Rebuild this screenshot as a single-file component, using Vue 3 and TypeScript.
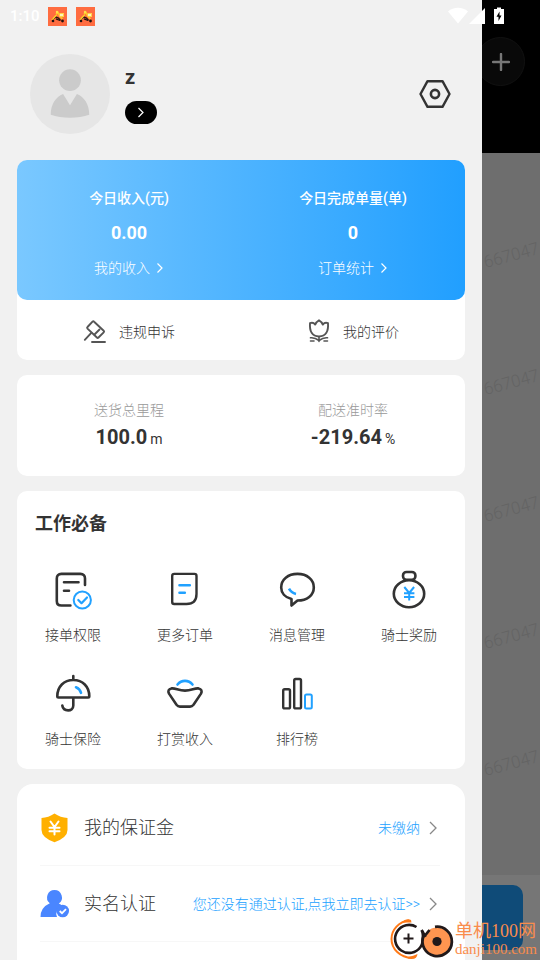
<script setup lang="ts">
interface Tool {
  id: string
  label: string
}

const tools: Tool[] = [
  { id: 'permission', label: '接单权限' },
  { id: 'orders', label: '更多订单' },
  { id: 'messages', label: '消息管理' },
  { id: 'rewards', label: '骑士奖励' },
  { id: 'insurance', label: '骑士保险' },
  { id: 'tips', label: '打赏收入' },
  { id: 'ranking', label: '排行榜' },
]

const earnings = [
  { title: '今日收入(元)', value: '0.00', link: '我的收入' },
  { title: '今日完成单量(单)', value: '0', link: '订单统计' },
]

const stats = [
  { label: '送货总里程', value: '100.0', unit: 'm' },
  { label: '配送准时率', value: '-219.64', unit: '%' },
]

const marks = ['667047', '667047', '667047', '667047', '667047']
</script>

<template>
  <div class="screen">
    <header class="status">
      <div class="status-left">
        <span class="clock">1:10</span>
        <svg v-for="n in 2" :key="n" class="app-badge" viewBox="0 0 19 19" aria-hidden="true">
          <rect width="19" height="19" fill="#ff6c40" />
          <path d="M4.500 12.500l3.500-2.500 2.500 1 2 2.500" stroke="#2b1a12" stroke-width="1.400" fill="none" />
          <path d="M8 7l2-1.500 1.500 3 3 3.500M4 13l3-3.500 2-2" stroke="#ffc928" stroke-width="1.600" fill="none" />
          <rect x="11.500" y="6" width="4.500" height="4" fill="#ffd34a" />
          <rect x="12" y="7" width="3" height="2" fill="#fff3c0" />
          <circle cx="9" cy="5" r="1.200" fill="#ffe04a" />
          <circle cx="5" cy="14" r="1.300" fill="#20130f" />
          <circle cx="14.500" cy="14" r="1.400" fill="#20130f" />
          <path d="M8 11.800l4 1.700" stroke="#20130f" stroke-width="1.300" />
        </svg>
      </div>
      <div class="status-right">
        <svg width="20" height="18" viewBox="0 0 20 18" aria-hidden="true"><path d="M0 4.500C5.500-.5 14.500-.5 20 4.500L10 16.500z" fill="#fff" /></svg>
        <svg class="signal" width="16" height="18" viewBox="0 0 16 18" aria-hidden="true"><path d="M0 17L16 1v16z" fill="#fff" /></svg>
        <svg width="10" height="18" viewBox="0 0 10 18" aria-hidden="true"><path d="M0 2h3V.500h4V2h3v15H0z" fill="#fff" /><path d="M5.500 4.500L2.500 9.800h2v4.200L7.500 8.500h-2z" fill="#000" /></svg>
      </div>
    </header>

    <main class="drawer">
      <section class="profile">
        <svg class="avatar" viewBox="0 0 81 81" role="img" aria-label="头像">
          <circle cx="40.500" cy="40.500" r="40.500" fill="#e6e6e6" />
          <circle cx="40.500" cy="26.500" r="11" fill="#cbcbcb" />
          <path d="M33.500 40.500L40.500 52l7-11.500C55 43.500 60 51 60 61.500c-11 4-28 4-39 0C21 51 26 43.500 33.500 40.500z" fill="#cbcbcb" />
        </svg>
        <div class="who">
          <h1 class="name">z</h1>
          <button class="level" aria-label="等级"><svg width="8" height="11" viewBox="0 0 8 11"><path d="M1.500 1L6 5.500 1.500 10" fill="none" stroke="#fff" stroke-width="1.200" /></svg></button>
        </div>
        <button class="settings" aria-label="设置">
          <svg width="32" height="30" viewBox="0 0 32 30" fill="none" stroke="#333" stroke-linejoin="round">
            <path d="M8.500 2.200h15L30.500 15l-7 12.800h-15L1.500 15z" stroke-width="2.400" />
            <circle cx="16" cy="15" r="4.100" stroke-width="2.600" />
          </svg>
        </button>
      </section>

      <section class="card income">
        <div class="income-top">
          <div v-for="e in earnings" :key="e.title" class="income-col">
            <h2>{{ e.title }}</h2>
            <strong>{{ e.value }}</strong>
            <a href="#">{{ e.link }}<svg width="8" height="12" viewBox="0 0 8 12"><path d="M1.500 1.500L6 6l-4.500 4.500" fill="none" stroke="currentColor" stroke-width="1.200" /></svg></a>
          </div>
        </div>
        <div class="income-links">
          <a href="#">
            <svg width="24" height="25" viewBox="0 0 24 25" fill="none" stroke="#555" stroke-width="1.900" stroke-linecap="round" stroke-linejoin="round">
              <path d="M4.500 8l5-5.300q.8-.8 1.600 0l9.600 9q.8.800 0 1.600l-5.200 5.200q-.8.800-1.600 0L4.500 9.600q-.8-.8 0-1.600z" />
              <path d="M8.300 13.800L1.800 20.800M11.500 15.500l5-5M9 23h13" />
            </svg>
            违规申诉
          </a>
          <a href="#">
            <svg width="24" height="25" viewBox="0 0 24 25" fill="none" stroke="#555" stroke-width="1.900" stroke-linecap="round" stroke-linejoin="round">
              <path d="M3 4.200c2-.8 4-.2 5.200 1.400.8-2 2-3.300 3.800-4.300 1.800 1 3 2.300 3.800 4.300 1.200-1.600 3.200-2.200 5.200-1.400.6 8-2 13.300-9 13.300S2.400 12.200 3 4.200z" />
              <path d="M12 18v4.500M3.500 18.800c3-.4 5.500.4 8.500 2.700 3-2.300 5.500-3.100 8.500-2.700M3.500 22h3.500M20.500 22H17" stroke-width="1.600" />
            </svg>
            我的评价
          </a>
        </div>
      </section>

      <section class="card stats">
        <div v-for="s in stats" :key="s.label" class="stat">
          <span>{{ s.label }}</span>
          <p><strong>{{ s.value }}</strong><small>{{ s.unit }}</small></p>
        </div>
      </section>

      <section class="card work">
        <h2>工作必备</h2>
        <nav class="tools">
          <a v-for="t in tools" :key="t.id" href="#">
            <svg width="40" height="40" viewBox="0 0 40 40" fill="none" stroke="#333" stroke-width="2.600" stroke-linecap="round" stroke-linejoin="round">
              <template v-if="t.id === 'permission'">
                <path d="M32 15V8.500q0-4.600-4.600-4.600H8.400Q3.800 3.900 3.800 8.500v22.400q0 4.600 4.600 4.600h9M11 12.300h14.500M11 20.800h5" />
                <circle cx="29.300" cy="30" r="8.600" stroke="#21a1ff" stroke-width="2" />
                <path d="M25.300 30l3.200 3.200 5.500-5.700" stroke="#21a1ff" stroke-width="2.200" />
              </template>
              <template v-else-if="t.id === 'orders'">
                <path d="M9 3.900h20.500q2 0 2 2V24q0 10-10 10H9.200q-2 0-2-2V5.900q0-2 2-2z" stroke-width="2.400" />
                <path d="M14.500 15.300h10.300M14.500 22.700h5.300" stroke="#21a1ff" />
              </template>
              <template v-else-if="t.id === 'messages'">
                <path d="M20.500 3.900C30 3.900 36.800 9.500 36.800 17.400S30 30.500 20.500 30.500L14.500 35.500V29C8 27.500 4.200 23 4.200 17.400 4.200 9.500 11 3.900 20.500 3.900z" />
                <path d="M12 18.700c1.500 2.800 4 4.600 7 5.300" stroke="#21a1ff" stroke-linecap="butt" />
              </template>
              <template v-else-if="t.id === 'rewards'">
                <ellipse cx="20" cy="23.700" rx="15.200" ry="13.500" />
                <rect x="14" y="2" width="12.400" height="7.800" rx="3.500" />
                <path d="M15.300 17l4.900 6 4.900-6M20.200 23v7.500M15 23.300h10.400M15 27h10.400" stroke="#21a1ff" stroke-width="2" stroke-linecap="butt" />
              </template>
              <template v-else-if="t.id === 'insurance'">
                <path d="M20.300 2v4M4.300 22.300C4.300 12.500 11 6 20.300 6s16 6.500 16 16.300q0 1.200-1.200 1.200H5.500q-1.200 0-1.200-1.200zM20.300 24v7.500c0 6.500-10 6.500-11 0" />
                <path d="M23 13.300q3.800 1.400 5 5.500" stroke="#21a1ff" />
              </template>
              <template v-else-if="t.id === 'tips'">
                <path d="M6.500 14.400c4-.5 7 2.200 13.500 2.200s9.500-2.700 13.500-2.200q4.500 1 2.500 5.200l-7.500 11.200q-1.400 1.800-3.500 1.800H15q-2.100 0-3.500-1.800L4 19.600q-2-4.200 2.500-5.200z" />
                <path d="M12.500 10.500c4-4.800 11-4.800 15 0" stroke="#21a1ff" />
              </template>
              <template v-else>
                <rect x="6.200" y="15.200" width="6.800" height="19.200" rx="1.500" stroke-width="2.400" />
                <rect x="17.200" y="5" width="6.800" height="29.400" rx="1.500" stroke-width="2.400" />
                <rect x="28" y="20.600" width="6.800" height="13.800" rx="1.500" stroke="#21a1ff" stroke-width="2" />
              </template>
            </svg>
            <span>{{ t.label }}</span>
          </a>
        </nav>
      </section>

      <section class="card account">
        <a href="#" class="row">
          <svg width="30" height="30" viewBox="0 0 30 30">
            <path d="M14.500.500Q20.500 4.500 27.500 5V17q0 7.500-13 12.300Q1.500 24.500 1.500 17V5Q8.500 4.500 14.500.500z" fill="#ffb000" />
            <path d="M10.500 8.500l4 5.500 4-5.500M14.500 14v7.500M9.500 14.800h10M9.500 18.300h10" fill="none" stroke="#fff" stroke-width="2" stroke-linecap="round" />
          </svg>
          <span class="row-label">我的保证金</span>
          <span class="row-note">未缴纳</span>
          <svg class="chevron" width="10" height="14" viewBox="0 0 10 14"><path d="M2 1l6 6-6 6" /></svg>
        </a>
        <a href="#" class="row">
          <svg width="30" height="30" viewBox="0 0 30 30">
            <path d="M14.500 1a7.500 7.500 0 0 1 4.300 13.600q2 .9 3.700 2.400A8 8 0 0 0 17 28H.5Q.5 18.500 9.800 14.300A7.500 7.500 0 0 1 14.500 1z" fill="#4a86ff" />
            <circle cx="22.700" cy="22" r="6.300" fill="#4a86ff" />
            <path d="M19.700 22l2.300 2.200 4-4" fill="none" stroke="#fff" stroke-width="1.800" />
          </svg>
          <span class="row-label">实名认证</span>
          <span class="row-note">您还没有通过认证,点我立即去认证&gt;&gt;</span>
          <svg class="chevron" width="10" height="14" viewBox="0 0 10 14"><path d="M2 1l6 6-6 6" /></svg>
        </a>
        <div class="row"></div>
      </section>
    </main>

    <aside class="peek">
      <div class="peek-head">
        <button aria-label="添加"><svg width="18" height="18" viewBox="0 0 18 18"><path d="M9 1v16M1 9h16" stroke="#777" stroke-width="2.400" stroke-linecap="round" /></svg></button>
      </div>
      <div class="peek-body">
        <span v-for="(m, i) in marks" :key="i">{{ m }}</span>
      </div>
      <div class="peek-foot"><div class="peek-action"></div></div>
    </aside>

    <div class="site">
      <svg width="64" height="42" viewBox="0 0 64 42" fill="none" aria-hidden="true">
        <path d="M19 2.500C9 3.500 1.500 11.500 1.500 21 1.500 31 10 39.500 22 40" stroke="#ff7a18" stroke-width="2" />
        <path d="M11 4.500q6-5 10-2.500l.5 2.500zM18 40.500q9 2 9.500-4.500-4 2-9.500 3z" fill="#ff7a18" />
        <circle cx="19" cy="20.500" r="15" fill="#fff" />
        <path d="M26.500 9A14 14 0 1 0 30.500 29Q34 24 32.500 13" stroke="#21191a" stroke-width="2.600" />
        <circle cx="47" cy="23.500" r="14" fill="#ff9550" />
        <path d="M45 8.900A14.700 14.700 0 1 1 33.500 18M31.500 12l4 7M39.500 12l-4 5" stroke="#21191a" stroke-width="2.800" />
        <circle cx="47" cy="23.500" r="4.600" fill="#21191a" />
        <path d="M18.500 15.500v10M13.500 20.500h10" stroke="#21191a" stroke-width="2" />
      </svg>
      <p><b>单机100网</b><span>danji100.com</span></p>
    </div>
  </div>
</template>

<style>
body {
  margin: 0;
}
</style>

<style scoped>
.screen {
  position: relative;
  display: flex;
  height: 100vh;
  overflow: hidden;
  background: #f1f1f1;
  color: #333;
  font: 300 14px/20px Roboto, "Noto Sans CJK SC", sans-serif;
}
h1, h2, p {
  margin: 0;
}
strong {
  font-weight: 700;
}
a {
  color: inherit;
  text-decoration: none;
}
button {
  display: flex;
  align-items: center;
  justify-content: center;
  padding: 0;
  border: 0;
  background: none;
}
svg {
  flex: none;
}
.status {
  position: absolute;
  z-index: 2;
  inset: 0 0 auto;
  display: flex;
  justify-content: space-between;
  padding: 6px 36px 0 10px;
}
.status-left, .status-right {
  display: flex;
  align-items: center;
}
.status-left {
  gap: 9px;
}
.clock {
  width: 29px;
  color: #fff;
  font-size: 15px;
  font-weight: 500;
}
.app-badge {
  width: 19px;
  height: 19px;
}
.signal {
  margin: 0 9px 0 1px;
}
.drawer {
  flex: 1;
  min-width: 0;
  overflow: hidden;
  padding: 0 17px;
  background: #f1f1f1;
}
.profile {
  display: flex;
  align-items: center;
  gap: 15px;
  padding: 54px 14px 26px 13px;
}
.avatar {
  width: 80px;
  height: 80px;
}
.who {
  flex: 1;
}
.name {
  margin-bottom: 12px;
  font-size: 20px;
  line-height: 24px;
}
.level {
  width: 32px;
  height: 23px;
  border-radius: 12px;
  background: #000;
}
.card {
  margin-bottom: 15px;
  border-radius: 10px;
  background: #fff;
}
.income-top {
  display: grid;
  grid-template-columns: 1fr 1fr;
  padding: 28px 0 22px;
  border-radius: 10px;
  background: linear-gradient(90deg, #7ac8ff, #219fff);
  color: #fff;
}
.income-col {
  display: flex;
  flex-direction: column;
  align-items: center;
  gap: 12px;
}
.income-col h2 {
  font-size: 14px;
  font-weight: 500;
}
.income-col strong {
  font-size: 18px;
  line-height: 26px;
}
.income-col a {
  display: flex;
  align-items: center;
  gap: 6px;
}
.income-links {
  display: grid;
  grid-template-columns: 1fr 1fr;
  height: 60px;
}
.income-links a {
  display: flex;
  align-items: center;
  justify-content: center;
  gap: 12px;
  padding-top: 3px;
}
.stats {
  display: grid;
  grid-template-columns: 1fr 1fr;
  padding: 25px 0;
}
.stat {
  display: flex;
  flex-direction: column;
  align-items: center;
  gap: 5px;
}
.stat span {
  color: #999;
}
.stat p {
  display: flex;
  align-items: baseline;
  gap: 3px;
  line-height: 24px;
}
.stat strong {
  font-size: 20px;
}
.stat small {
  font-size: 14px;
  font-weight: 400;
}
.work {
  padding: 21px 0 20px;
}
.work h2 {
  padding: 0 18px 34px;
  font-size: 18px;
  line-height: 24px;
}
.tools {
  display: grid;
  grid-template-columns: repeat(4, 1fr);
  row-gap: 29px;
}
.tools a {
  display: flex;
  flex-direction: column;
  align-items: center;
  gap: 15px;
}
.account {
  margin: 0;
  padding: 6px 25px 0 23px;
  border-radius: 16px;
}
.row {
  display: flex;
  align-items: center;
  box-sizing: border-box;
  height: 76px;
  border-bottom: 1px solid #f7f7f7;
}
.row-label {
  flex: 1;
  padding-left: 14px;
  font-size: 18px;
  line-height: 24px;
}
.row-note {
  padding-right: 8px;
  color: #21a1ff;
}
.chevron {
  margin-right: 2px;
  fill: none;
  stroke: #888;
  stroke-width: 1.300;
}
.peek {
  display: flex;
  flex: 0 0 58px;
  flex-direction: column;
  overflow: hidden;
  background: #6e6e6e;
}
.peek-head {
  height: 116px;
  padding-top: 37px;
  background: #000;
}
.peek-head button {
  width: 49px;
  height: 49px;
  margin-left: -6px;
  border: 1px solid #111;
  border-radius: 50%;
  background: #090909;
}
.peek-body {
  display: flex;
  flex: 1;
  flex-direction: column;
  align-items: center;
  gap: 107px;
  padding-top: 92px;
  color: #646464;
  font-size: 17px;
}
.peek-body span {
  transform: rotate(-15deg);
}
.peek-foot {
  padding: 10px 17px 10px 0;
  background: #767676;
}
.peek-action {
  height: 65px;
  border-radius: 0 10px 10px 0;
  background: #0f4b78;
}
.site {
  position: absolute;
  right: 3px;
  bottom: 0;
  display: flex;
  align-items: center;
  gap: 1px;
  color: #f98c4c;
  font-family: "Liberation Serif", "Noto Sans CJK SC", serif;
}
.site p {
  display: flex;
  flex-direction: column;
}
.site b {
  font-size: 18px;
  font-weight: 400;
}
.site span {
  font-size: 15px;
  line-height: 16px;
}
</style>
